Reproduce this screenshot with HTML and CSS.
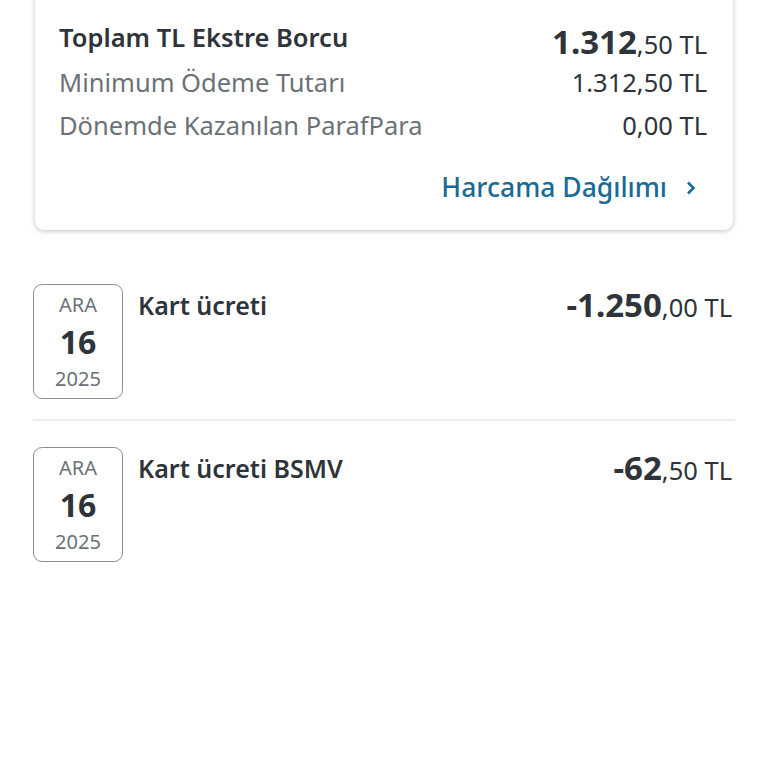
FILE: index.html
```html
<!DOCTYPE html>
<html>
  <head>
    <title>Ekstre</title>
    <link rel="stylesheet" href="styles.css">
  </head>
  <body>
    <div class="summary">
      <div class="line first">
        <span class="label main">Toplam TL Ekstre Borcu</span>
        <span class="amount big"><b>1.312</b>,50 TL</span>
      </div>
      <div class="line">
        <span class="label">Minimum Ödeme Tutarı</span>
        <span class="amount">1.312,50 TL</span>
      </div>
      <div class="line">
        <span class="label">Dönemde Kazanılan ParafPara</span>
        <span class="amount">0,00 TL</span>
      </div>
      <a class="link" href="#">
        Harcama Dağılımı
        <svg width="12" height="16" viewBox="0 0 12 16">
          <path d="M3 2.5 L8.5 8 L3 13.5" fill="none" stroke="#1a6a96" stroke-width="2.6"/>
        </svg>
      </a>
    </div>

    <div class="list">
      <div class="item">
        <div class="date">
          <span class="month">ARA</span>
          <span class="day">16</span>
          <span class="year">2025</span>
        </div>
        <div class="title">Kart ücreti</div>
        <div class="price"><b>-1.250</b>,00 TL</div>
      </div>
      <div class="item">
        <div class="date">
          <span class="month">ARA</span>
          <span class="day">16</span>
          <span class="year">2025</span>
        </div>
        <div class="title">Kart ücreti BSMV</div>
        <div class="price"><b>-62</b>,50 TL</div>
      </div>
    </div>
  </body>
</html>
```

FILE: styles.css
```css
body {
  margin: 0;
  padding: 0;
  background: #fff;
  font-family: "Noto Sans", sans-serif;
  color: #2e3439;
}

.summary {
  margin: -20px 35px 0 35px;
  padding: 36px 26px 21px 24px;
  background: #fff;
  border-radius: 9px;
  box-shadow: 0 1px 5px rgba(0,0,0,0.25);
}

.line {
  display: flex;
  justify-content: space-between;
  align-items: flex-start;
  height: 43px;
  font-size: 25.5px;
  line-height: 43px;
}

.line.first {
  height: 45px;
}

.label {
  color: #6b7176;
}

.label.main {
  color: #2e3439;
  font-weight: 600;
}

.amount {
  color: #2e3439;
}

.amount.big {
  padding-top: 4px;
}

.amount.big b {
  font-size: 33px;
  font-weight: 700;
}

.link {
  display: flex;
  justify-content: flex-end;
  align-items: center;
  gap: 18px;
  margin-top: 19px;
  padding-right: 10px;
  font-size: 26.5px;
  font-weight: 500;
  line-height: 43px;
  color: #1a6a96;
  text-decoration: none;
}

.list {
  margin: 54px 33px 0 33px;
}

.item {
  display: flex;
  align-items: flex-start;
  padding-bottom: 20px;
  margin-bottom: 26px;
  border-bottom: 2px solid #eceef0;
}

.item:last-child {
  border-bottom: none;
}

.date {
  width: 88px;
  height: 113px;
  border: 1px solid #8a8f93;
  border-radius: 9px;
  display: flex;
  flex-direction: column;
  align-items: center;
  justify-content: center;
  flex-shrink: 0;
}

.month,
.year {
  font-size: 20px;
  color: #6b7176;
  line-height: 37px;
}

.day {
  font-size: 32px;
  font-weight: 700;
  line-height: 37px;
}

.title {
  flex: 1;
  margin-left: 15px;
  margin-top: 4px;
  font-size: 25px;
  line-height: 34px;
  font-weight: 600;
}

.price {
  margin-top: 4px;
  padding-right: 3px;
  font-size: 25.5px;
  line-height: 34px;
}

.price b {
  font-size: 33px;
  font-weight: 700;
}
```
